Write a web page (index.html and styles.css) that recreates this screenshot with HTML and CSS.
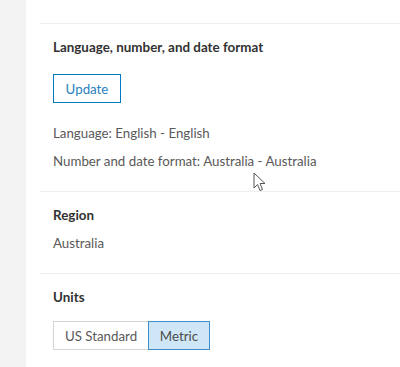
FILE: index.html
```html
<!DOCTYPE html>
<html lang="en">
<head>
    <meta charset="UTF-8">
    <title>Settings</title>
    <link rel="stylesheet" href="styles.css">
</head>
<body>
    <div id="site">
        <aside class="sidebar"></aside>
        <main class="panel">
            <section class="group">
                <h3 class="group-title">Language, number, and date format</h3>
                <button class="btn-outline">Update</button>
                <p class="value">Language: English - English</p>
                <p class="value">Number and date format: Australia - Australia</p>
            </section>
            <section class="group">
                <h3 class="group-title">Region</h3>
                <p class="value">Australia</p>
            </section>
            <section class="group">
                <h3 class="group-title">Units</h3>
                <div class="segmented">
                    <button class="segment us">US Standard</button>
                    <button class="segment active">Metric</button>
                </div>
            </section>
        </main>
        <svg class="cursor" width="13" height="20" viewBox="0 0 13 20">
            <path d="M1 1 L1 16 L4.5 12.5 L7 18.5 L9.5 17.5 L7 11.5 L12 11.5 Z" fill="#fff" stroke="#555" stroke-width="1"/>
        </svg>
    </div>
</body>
</html>
```

FILE: styles.css
```css
body, html {
    margin: 0;
    padding: 0;
    height: 100%;
    overflow: hidden;
}

#site {
    position: relative;
    display: flex;
    height: 100%;
    font-family: "Lato", "Open Sans", sans-serif;
    color: #595959;
}

.sidebar {
    width: 26px;
    background-color: #f3f3f3;
    flex-shrink: 0;
}

.panel {
    flex: 1;
    background: #fff;
    padding: 23px 0 0 14px;
}

.group {
    border-top: 1px solid #efefef;
    padding: 14px 0 16px 13px;
}

.group-title {
    margin: 0 0 5px 0;
    font-size: 13.4px;
    line-height: 18px;
    font-weight: 700;
    color: #323232;
}

.value {
    margin: 0;
    font-size: 13.3px;
    line-height: 28px;
}

.btn-outline {
    margin: 13px 0 16px 0;
    height: 29px;
    width: 68px;
    padding: 0;
    border: 1px solid #0079c1;
    background: #fff;
    color: #2a7fc0;
    font-family: inherit;
    font-size: 13.3px;
}

/* units toggle */
.segmented {
    display: flex;
    margin-top: 15px;
}

.segment {
    height: 29px;
    padding: 0;
    border: 1px solid #d4d4d4;
    background: #fff;
    color: #595959;
    font-family: inherit;
    font-size: 13.3px;
}

.segment.us {
    width: 95px;
    border-right: none;
}

.segment.active {
    width: 62px;
    background: #cfe6f6;
    border-color: #3d8ecf;
    color: #4c4c4c;
}

.cursor {
    position: absolute;
    left: 253px;
    top: 172px;
}
```
